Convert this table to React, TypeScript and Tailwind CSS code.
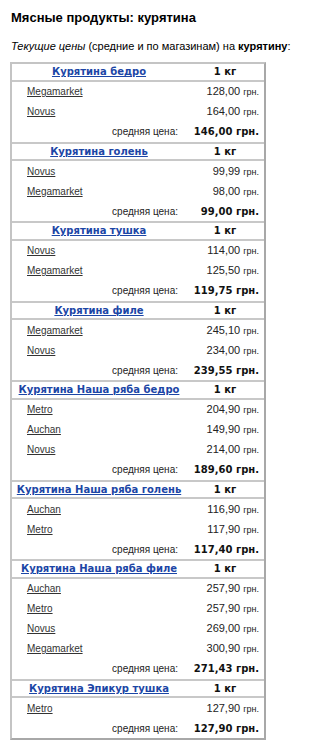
const groups = [
  { name: "Курятина бедро", unit: "1 кг", avg: "146,00", stores: [["Megamarket", "128,00"], ["Novus", "164,00"]] },
  { name: "Курятина голень", unit: "1 кг", avg: "99,00", stores: [["Novus", "99,99"], ["Megamarket", "98,00"]] },
  { name: "Курятина тушка", unit: "1 кг", avg: "119,75", stores: [["Novus", "114,00"], ["Megamarket", "125,50"]] },
  { name: "Курятина филе", unit: "1 кг", avg: "239,55", stores: [["Megamarket", "245,10"], ["Novus", "234,00"]] },
  { name: "Курятина Наша ряба бедро", unit: "1 кг", avg: "189,60", stores: [["Metro", "204,90"], ["Auchan", "149,90"], ["Novus", "214,00"]] },
  { name: "Курятина Наша ряба голень", unit: "1 кг", avg: "117,40", stores: [["Auchan", "116,90"], ["Metro", "117,90"]] },
  { name: "Курятина Наша ряба филе", unit: "1 кг", avg: "271,43", stores: [["Auchan", "257,90"], ["Metro", "257,90"], ["Novus", "269,00"], ["Megamarket", "300,90"]] },
  { name: "Курятина Эпикур тушка", unit: "1 кг", avg: "127,90", stores: [["Metro", "127,90"]] },
];

const bold = { fontFamily: "'DejaVu Sans', Verdana, sans-serif" };

export default function App() {
  return (
    <div className="bg-white text-[#222] px-[11px] pt-[10px] pb-4 font-['Liberation_Sans',Arial,sans-serif]">
      <h1 className="text-[13px] font-bold leading-4 text-black">Мясные продукты: курятина</h1>
      <p className="text-[11px] leading-4 mt-[12px] text-black">
        <i>Текущие цены</i> (средние и по магазинам) на <b>курятину</b>:
      </p>

      <div className="mt-[8px] ml-[-1px] w-[256px] border-2 border-t-[#c4c4c4] border-l-[#c4c4c4] border-r-[#a8a8a8] border-b-[#a8a8a8]">
        {groups.map((g, i) => (
          <div key={g.name} className={i > 0 ? "border-t-2 border-[#c8c8c8]" : ""}>
            <div className="flex h-[17.5px] items-center border-b-2 border-[#c8c8c8] text-[10px] font-bold" style={bold}>
              <div className="w-[174px] text-center">
                <a href="#" className="text-[#1c46a6] underline">{g.name}</a>
              </div>
              <div className="flex-1 text-center text-[#111]">{g.unit}</div>
            </div>
            {g.stores.map(([s, p]) => (
              <div key={s} className="flex h-[20px] items-center">
                <div className="w-[174px] pl-[15px] text-[10px]">
                  <a href="#" className="text-[#333] underline">{s}</a>
                </div>
                <div className="flex-1 text-right pr-[5px] text-[11px]">
                  {p} <span className="text-[9px]">грн.</span>
                </div>
              </div>
            ))}
            <div className="flex h-[20px] items-center">
              <div className="w-[174px] pr-[8px] text-right text-[10px]">средняя цена:</div>
              <div className="flex-1 text-right pr-[5px] text-[10px] font-bold text-[#111]" style={bold}>
                {g.avg} грн.
              </div>
            </div>
          </div>
        ))}
      </div>
    </div>
  );
}
